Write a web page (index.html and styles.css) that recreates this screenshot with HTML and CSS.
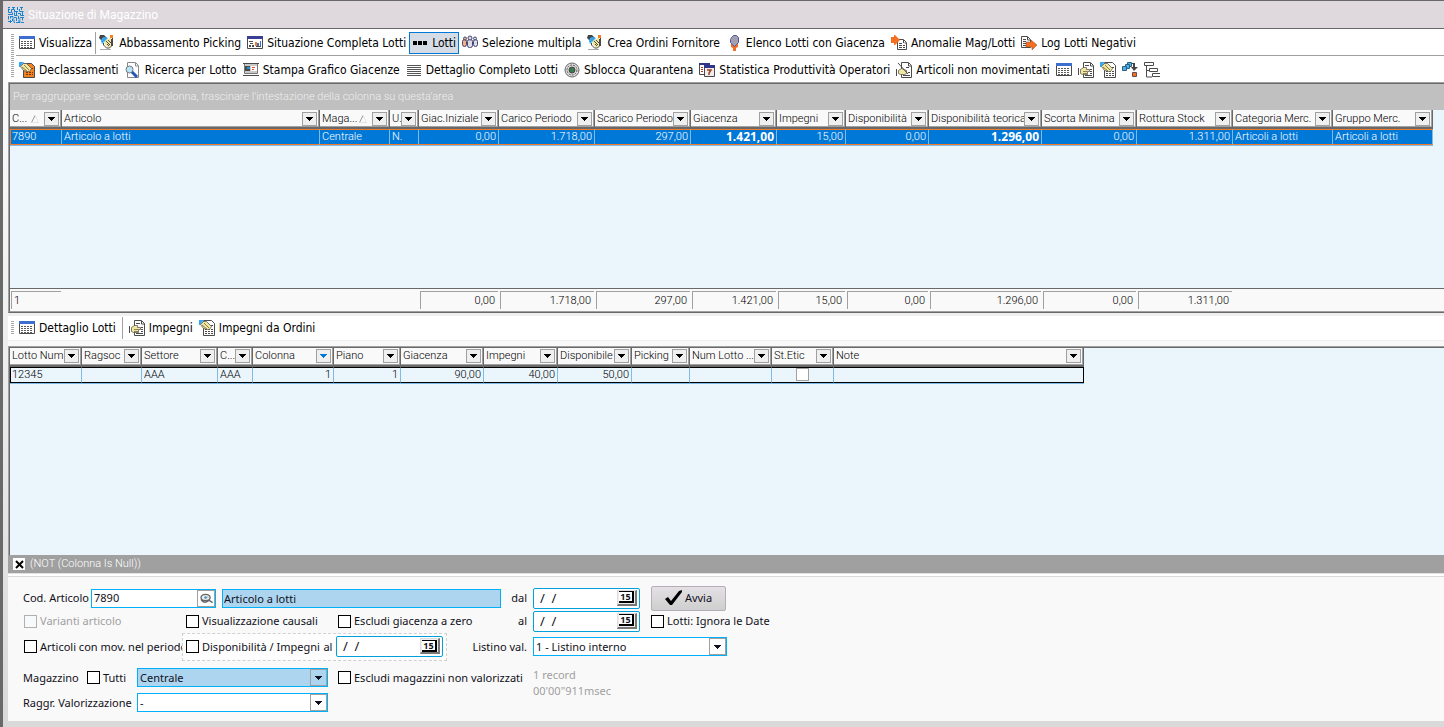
FILE: index.html
```html
<!DOCTYPE html>
<html lang="it">
<head>
<meta charset="utf-8">
<title>Situazione di Magazzino</title>
<link rel="stylesheet" href="styles.css">
</head>
<body>
<svg class="defs" aria-hidden="true">
  <symbol id="i-logo" viewBox="0 0 16 16"><g fill="none" stroke="#1583d0" stroke-width="1"><path d="M0 .5h2M4 .5h3M9.500 0v3M12 .5h3M.5 2v3.500h3V2.500h3v3M5.500 0v3M11.500 2v2.500h4M7 4.500h3M13.500 1v2M0 7.500h4.500V5.500M6.500 6v2.500h3M8.500 5v3M10 6.500h2.500v2H16M14.500 5v3M.5 9v3.500M2 9.500h3v3M2.500 9v2.500M6 10.500h2.500V14M10.500 9v3h2M12 10.500h4M14.500 10v3.500M0 14.500h4M2.500 13v3M4.500 14v-2M6 12.500v3h1M8 15.500h4v-2M10 14h2M13 15.500h3M0 .5v2h2"/></g></symbol>
  <symbol id="i-grid" viewBox="0 -1 16 16"><path fill="#fff" stroke="#4a4a4a" d="M.5.5h15v12H.5z"/><path fill="#3c6fd0" d="M0 0h16v3H0z"/><path stroke="#4a4a4a" stroke-dasharray="2 1" d="M2 5.500h12M2 7.500h12M2 9.500h12M2 11.500h12" stroke-width=".9"/></symbol>
  <symbol id="i-sign" viewBox="0 0 16 16"><path fill="#f2e6a0" d="M5 6l6-3h2v8l-3 2-4-3z"/><path fill="none" stroke="#4a4a4a" d="M4.500 8v2l3 3h3l2-2V4M7 6l4 4M9 5l3 3M8 9l2 2"/><path fill="#444" d="M1 0h4l3 3-3 3H3L0 3z"/><path fill="#35a7ee" d="M3 3l2-1 4 1-3 3-3 3-1-3z"/><path stroke="#aaa" fill="none" d="M1 14.500h11"/><path stroke="#4a4a4a" fill="none" d="M13.500 1v10"/><path fill="#f58220" d="M11 0h3v3h-3z"/></symbol>
  <symbol id="i-report" viewBox="0 -1 16 16"><path fill="#fff" stroke="#4a4a4a" d="M.5.5h15v12H.5z"/><path fill="#3a3f91" d="M0 0h16v3H0z"/><path fill="#4a4a4a" d="M2 5h4v1H2zM3 7h3v1H3zM2 9h2v2H2zM5 9h2v2H5zM9 10h5v1H9z"/><path fill="#f58220" d="M8 6h2v4H8z"/><path fill="#3c6fd0" d="M10 7h2v3h-2zM13 5h1v5h-1z"/></symbol>
  <symbol id="i-dots" viewBox="0 0 16 16"><path d="M1 6h4v4H1zM6 6h4v4H6zM11 6h4v4h-4z"/></symbol>
  <symbol id="i-people" viewBox="0 0 16 16"><g stroke="#45456e" fill="#dcdcea"><rect x=".5" y="4.500" width="4" height="7" rx="2" fill="#f4b183"/><rect x="11.500" y="4.500" width="4" height="7" rx="2"/><rect x="5.500" y="4.500" width="5" height="8" rx="2"/><circle cx="3" cy="3.500" r="1.500" fill="#f4b183"/><circle cx="8" cy="3" r="2"/><circle cx="13" cy="3.500" r="1.500"/></g></symbol>
  <symbol id="i-pin" viewBox="0 0 16 16"><path fill="#f36f21" d="M5 9h7v3l-2 1v3H7v-3l-2-1z"/><path fill="#a0a0b0" stroke="#5555a0" d="M5.500 2.500l2-2h3l2 2v5l-2 2-2 2-2-2-2-2v-3z"/></symbol>
  <symbol id="i-docin" viewBox="0 0 16 16"><path fill="#fff" stroke="#4a4a4a" d="M6.500 4.500h6l3 3v7h-9z"/><path stroke="#4a4a4a" fill="none" d="M12.500 5v3H15M8 8.500h3M8 10.500h6M8 12.500h6" stroke-dasharray="3 1"/><path fill="#f36f21" d="M0 2h3V0h1l5 5-5 5H3V8H0z"/></symbol>
  <symbol id="i-docout" viewBox="0 0 16 16"><path fill="#fff" stroke="#4a4a4a" d="M.5 1.500h6l3 3v8h-9z"/><path stroke="#4a4a4a" fill="none" d="M2 4.500h3M2 6.500h3M2 8.500h3M2 10.500h3M6.500 2v3H9"/><path fill="#f36f21" stroke="#9a4a18" stroke-width=".5" d="M5 7h5V5l6 5-5 5v-3H5z"/></symbol>
  <symbol id="i-declass" viewBox="0 0 16 16"><path fill="#f58220" stroke="#4a4a4a" d="M4.500 1.500h8l3 3v11h-11z"/><path stroke="#6b3a10" stroke-dasharray="2 1" d="M7 10.500h7M7 12.500h7M12 6.500h3"/><path fill="#35a7ee" d="M0 0h5L1 5H0z"/><path fill="#f2e6a0" stroke="#4a4a4a" stroke-width=".7" d="M1.500 4.500l3-3h3l5 5-2 3h-2l-4-1z"/><path stroke="#8a8050" fill="none" d="M5 3l5 5M3 5l5 4"/></symbol>
  <symbol id="i-find" viewBox="0 0 16 16"><path fill="#fff" stroke="#888" d="M2.500.5h8l3 3v12h-11z"/><path stroke="#888" fill="none" d="M10.500 1v3H13"/><circle cx="4.500" cy="7.500" r="3.500" fill="#b6e4f8" stroke="#777"/><path stroke="#2458b8" stroke-width="3" d="M7 10l5 5"/></symbol>
  <symbol id="i-chart" viewBox="0 -1 16 16"><path fill="#c9c9c9" stroke="#777" d="M1.500.5h13v10h-13z"/><path fill="#4a4a4a" d="M0 0h16v1H0zM2 3h5v5H2zM0 12h16v1H0z"/><path fill="#fff" d="M8 3h6v5H8z"/><path fill="#2690d8" d="M4 4h3v2H4z"/><path fill="#e25230" d="M9 4h3v1H9zM9 6h2v1H9z"/></symbol>
  <symbol id="i-lines" viewBox="0 0 16 16"><path stroke="#555" d="M1 3.500h14M1 5.500h14M1 7.500h14M1 9.500h14M1 11.500h14M1 13.500h14"/></symbol>
  <symbol id="i-lock" viewBox="0 0 16 16"><circle cx="8" cy="8" r="7" fill="#e4e4e4" stroke="#666"/><circle cx="8" cy="8" r="5" fill="#ddd" stroke="#555" stroke-dasharray="2 1"/><circle cx="8" cy="8" r="3" fill="#3b7a4a" stroke="#444"/></symbol>
  <symbol id="i-stat" viewBox="0 0 16 16"><path fill="#fff" stroke="#4a4a4a" d="M.5 1.500h10v11H.5z"/><path fill="#30358a" d="M0 1h11v2H0z"/><path fill="none" stroke="#a33c20" d="M2 5.500h2M2 7.500h2M2 9.500h2"/><path fill="#eee" stroke="#4a4a4a" d="M5.500 5.500h10v9h-10z"/><path fill="#30358a" d="M5 3h11v3H5z"/><path fill="none" stroke="#a33c20" stroke-width="1.500" d="M8 8h4l-2 3v2"/></symbol>
  <symbol id="i-hand" viewBox="0 0 16 16"><path fill="#fff" stroke="#4a4a4a" d="M5.500.5h7l3 3v12h-10z"/><path fill="none" stroke="#4a4a4a" d="M12.500 1v3H15M7 3.500h4M12 7.500h2M12 9.500h2M12 11.500h2M7 13.500h7"/><path fill="#f2e6a0" stroke="#4a4a4a" stroke-width=".7" d="M2.500 7.500l3-2h3v2h3v2h-2v3h-5l-2-1z"/><path stroke="#8a8050" fill="none" d="M5 9.500h4M5 11.500h4"/><path stroke="#4a4a4a" d="M.5 6v7"/></symbol>
  <symbol id="i-handpen" viewBox="0 0 16 16"><path fill="#fff" stroke="#4a4a4a" d="M5.500.5h7l3 3v12h-10z"/><path fill="none" stroke="#4a4a4a" d="M12.500 1v3H15M10 5.500h3M12 10.500h2M7 13.500h7"/><path fill="#f2e6a0" stroke="#4a4a4a" stroke-width=".7" d="M2.500 8.500l3-2 5 2v3l-2 1h-4l-2-1z"/><path stroke="#4a4a4a" fill="none" d="M.5 7v7M2 1l10 11"/></symbol>
  <symbol id="i-handdoc" viewBox="0 0 16 16"><path fill="#fff" stroke="#4a4a4a" d="M4.500.5h8l3 3v12h-11z"/><path fill="none" stroke="#4a4a4a" stroke-dasharray="2 1" d="M6 9.500h8M6 11.500h8M6 13.500h8M12 5.500h3"/><path fill="#35a7ee" d="M0 0h5L1 5H0z"/><path fill="#f2e6a0" stroke="#4a4a4a" stroke-width=".7" d="M1.500 4.500l3-3h3l5 5-2 3h-2l-4-1z"/><path stroke="#8a8050" fill="none" d="M5 3l5 5M3 5l5 4"/></symbol>
  <symbol id="i-boxes" viewBox="0 0 16 16"><g fill="#46b0f2" stroke="#30607a"><path d="M5.500.5h4v4h-4z"/><path d="M3.500 2.500h4v4h-4z"/><path d="M.5 4.500h4v4h-4z"/></g><path fill="#444" d="M10 1h3v4h3l-4 4-3-4h2V2h-1z"/><path fill="#f36f21" stroke="#6a4a4a" d="M10.500 10.500h4v4h-4z"/></symbol>
  <symbol id="i-tree" viewBox="0 0 16 16"><path fill="#fff" stroke="#4a4a4a" d="M.5.5h9v3h-9zM5.500 6.500h8v3h-8zM16 11.500H8.500v3H16M2.500 4v11H8M3 8.500h2"/></symbol>
  <symbol id="i-arrow" viewBox="0 0 7 4"><path fill="currentColor" d="M0 0h7v1H6v1H5v1H4v1H3V3H2V2H1V1H0z"/></symbol>
  <symbol id="i-sort" viewBox="0 0 8 8"><path fill="none" stroke="#999" d="M.5 7.500l3.500-7"/><path fill="none" stroke="#e4e4e4" d="M4 .5l3.500 7h-7"/></symbol>
  <symbol id="i-eye" viewBox="0 0 14 12"><ellipse cx="6" cy="5" rx="5" ry="3.500" fill="#eee" stroke="#666" stroke-width="1.500"/><path fill="none" stroke="#666" stroke-width="1.500" d="M1 7c2 4 6 4 9 1l3 2v1"/><circle cx="6" cy="5" r="1.500" fill="#3b9fc4"/><path fill="#c44" d="M8 4h1v1H8z"/></symbol>
  <symbol id="i-check" viewBox="0 0 17 16"><path d="M0 9l3-2 3 4L14 1l3-1v2L7 15H5z"/></symbol>
  <symbol id="i-x" viewBox="0 0 9 9"><path fill="none" stroke="#000" stroke-width="2" d="M1 1l7 7M8 1l-7 7"/></symbol>
</svg>

<div class="window">
  <header class="titlebar"><svg class="ic"><use href="#i-logo"/></svg><h1>Situazione di Magazzino</h1></header>
  <main class="client">
    <nav class="toolbar toolbar-main">
      <div class="toolrow">
        <button class="tool"><svg class="ic"><use href="#i-grid"/></svg>Visualizza</button>
        <span class="sep"></span>
        <button class="tool"><svg class="ic"><use href="#i-sign"/></svg>Abbassamento Picking</button>
        <button class="tool"><svg class="ic"><use href="#i-report"/></svg>Situazione Completa Lotti</button>
        <button class="tool pressed"><svg class="ic"><use href="#i-dots"/></svg>Lotti</button>
        <button class="tool"><svg class="ic"><use href="#i-people"/></svg>Selezione multipla</button>
        <button class="tool"><svg class="ic"><use href="#i-sign"/></svg>Crea Ordini Fornitore</button>
        <button class="tool"><svg class="ic"><use href="#i-pin"/></svg>Elenco Lotti con Giacenza</button>
        <button class="tool"><svg class="ic"><use href="#i-docin"/></svg>Anomalie Mag/Lotti</button>
        <button class="tool"><svg class="ic"><use href="#i-docout"/></svg>Log Lotti Negativi</button>
      </div>
      <div class="toolrow">
        <button class="tool"><svg class="ic"><use href="#i-declass"/></svg>Declassamenti</button>
        <button class="tool"><svg class="ic"><use href="#i-find"/></svg>Ricerca per Lotto</button>
        <button class="tool"><svg class="ic"><use href="#i-chart"/></svg>Stampa Grafico Giacenze</button>
        <button class="tool"><svg class="ic"><use href="#i-lines"/></svg>Dettaglio Completo Lotti</button>
        <button class="tool"><svg class="ic"><use href="#i-lock"/></svg>Sblocca Quarantena</button>
        <button class="tool"><svg class="ic"><use href="#i-stat"/></svg>Statistica Produttività Operatori</button>
        <button class="tool"><svg class="ic"><use href="#i-handpen"/></svg>Articoli non movimentati</button>
        <button class="tool" aria-label="Griglia"><svg class="ic"><use href="#i-grid"/></svg></button>
        <button class="tool" aria-label="Impegni"><svg class="ic"><use href="#i-hand"/></svg></button>
        <button class="tool" aria-label="Ordini"><svg class="ic"><use href="#i-handdoc"/></svg></button>
        <button class="tool" aria-label="Movimenti"><svg class="ic"><use href="#i-boxes"/></svg></button>
        <button class="tool" aria-label="Struttura"><svg class="ic"><use href="#i-tree"/></svg></button>
      </div>
    </nav>

    <section class="grid grid-stock">
      <p class="groupbar">Per raggruppare secondo una colonna, trascinare l'intestazione della colonna su questa'area</p>
      <div class="gridbody">
        <table class="data stock">
          <colgroup><col class="w52"><col class="w258"><col class="w70"><col class="w29"><col class="w80"><col class="w96"><col class="w96"><col class="w86"><col class="w69"><col class="w83"><col class="w113"><col class="w95"><col class="w96"><col class="w100"><col class="w100"></colgroup>
          <thead><tr>
            <th><div class="hd"><span>C...</span><svg class="sort"><use href="#i-sort"/></svg><button aria-label="Filtra"><svg><use href="#i-arrow"/></svg></button></div></th>
            <th><div class="hd"><span>Articolo</span><button aria-label="Filtra"><svg><use href="#i-arrow"/></svg></button></div></th>
            <th><div class="hd"><span>Maga...</span><svg class="sort"><use href="#i-sort"/></svg><button aria-label="Filtra"><svg><use href="#i-arrow"/></svg></button></div></th>
            <th><div class="hd"><span>U.</span><button aria-label="Filtra"><svg><use href="#i-arrow"/></svg></button></div></th>
            <th><div class="hd"><span>Giac.Iniziale</span><button aria-label="Filtra"><svg><use href="#i-arrow"/></svg></button></div></th>
            <th><div class="hd"><span>Carico Periodo</span><button aria-label="Filtra"><svg><use href="#i-arrow"/></svg></button></div></th>
            <th><div class="hd"><span>Scarico Periodo</span><button aria-label="Filtra"><svg><use href="#i-arrow"/></svg></button></div></th>
            <th><div class="hd"><span>Giacenza</span><button aria-label="Filtra"><svg><use href="#i-arrow"/></svg></button></div></th>
            <th><div class="hd"><span>Impegni</span><button aria-label="Filtra"><svg><use href="#i-arrow"/></svg></button></div></th>
            <th><div class="hd"><span>Disponibilità</span><button aria-label="Filtra"><svg><use href="#i-arrow"/></svg></button></div></th>
            <th><div class="hd"><span>Disponibilità teorica</span><button aria-label="Filtra"><svg><use href="#i-arrow"/></svg></button></div></th>
            <th><div class="hd"><span>Scorta Minima</span><button aria-label="Filtra"><svg><use href="#i-arrow"/></svg></button></div></th>
            <th><div class="hd"><span>Rottura Stock</span><button aria-label="Filtra"><svg><use href="#i-arrow"/></svg></button></div></th>
            <th><div class="hd"><span>Categoria Merc.</span><button aria-label="Filtra"><svg><use href="#i-arrow"/></svg></button></div></th>
            <th><div class="hd"><span>Gruppo Merc.</span><button aria-label="Filtra"><svg><use href="#i-arrow"/></svg></button></div></th>
          </tr></thead>
          <tbody><tr class="selected">
            <td>7890</td><td>Articolo a lotti</td><td>Centrale</td><td>N.</td><td class="num">0,00</td><td class="num">1.718,00</td><td class="num">297,00</td><td class="num strong">1.421,00</td><td class="num">15,00</td><td class="num">0,00</td><td class="num strong">1.296,00</td><td class="num">0,00</td><td class="num">1.311,00</td><td>Articoli a lotti</td><td>Articoli a lotti</td>
          </tr></tbody>
        </table>
      </div>
      <div class="gridfoot">
        <table class="totals">
          <colgroup><col class="w52"><col class="w258"><col class="w70"><col class="w29"><col class="w80"><col class="w96"><col class="w96"><col class="w86"><col class="w69"><col class="w83"><col class="w113"><col class="w95"><col class="w96"><col class="w100"><col class="w100"></colgroup>
          <tbody><tr>
            <td><div class="total count">1</div></td><td></td><td></td><td></td>
            <td><div class="total">0,00</div></td><td><div class="total">1.718,00</div></td><td><div class="total">297,00</div></td><td><div class="total">1.421,00</div></td><td><div class="total">15,00</div></td><td><div class="total">0,00</div></td><td><div class="total">1.296,00</div></td><td><div class="total">0,00</div></td><td><div class="total">1.311,00</div></td><td></td><td></td>
          </tr></tbody>
        </table>
      </div>
    </section>

    <nav class="toolbar toolbar-sub">
      <div class="toolrow">
        <button class="tool"><svg class="ic"><use href="#i-grid"/></svg>Dettaglio Lotti</button>
        <span class="sep"></span>
        <button class="tool"><svg class="ic"><use href="#i-hand"/></svg>Impegni</button>
        <button class="tool"><svg class="ic"><use href="#i-handdoc"/></svg>Impegni da Ordini</button>
      </div>
    </nav>

    <section class="grid grid-lots">
      <div class="gridbody">
        <table class="data lots">
          <colgroup><col class="w72"><col class="w60"><col class="w76"><col class="w35"><col class="w81"><col class="w67"><col class="w83"><col class="w74"><col class="w74"><col class="w58"><col class="w82"><col class="w62"><col class="w250"></colgroup>
          <thead><tr>
            <th><div class="hd"><span>Lotto Num</span><button aria-label="Filtra"><svg><use href="#i-arrow"/></svg></button></div></th>
            <th><div class="hd"><span>Ragsoc</span><button aria-label="Filtra"><svg><use href="#i-arrow"/></svg></button></div></th>
            <th><div class="hd"><span>Settore</span><button aria-label="Filtra"><svg><use href="#i-arrow"/></svg></button></div></th>
            <th><div class="hd"><span>C...</span><button aria-label="Filtra"><svg><use href="#i-arrow"/></svg></button></div></th>
            <th><div class="hd"><span>Colonna</span><button class="active" aria-label="Filtra"><svg><use href="#i-arrow"/></svg></button></div></th>
            <th><div class="hd"><span>Piano</span><button aria-label="Filtra"><svg><use href="#i-arrow"/></svg></button></div></th>
            <th><div class="hd"><span>Giacenza</span><button aria-label="Filtra"><svg><use href="#i-arrow"/></svg></button></div></th>
            <th><div class="hd"><span>Impegni</span><button aria-label="Filtra"><svg><use href="#i-arrow"/></svg></button></div></th>
            <th><div class="hd"><span>Disponibile</span><button aria-label="Filtra"><svg><use href="#i-arrow"/></svg></button></div></th>
            <th><div class="hd"><span>Picking</span><button aria-label="Filtra"><svg><use href="#i-arrow"/></svg></button></div></th>
            <th><div class="hd"><span>Num Lotto ...</span><button aria-label="Filtra"><svg><use href="#i-arrow"/></svg></button></div></th>
            <th><div class="hd"><span>St.Etic</span><button aria-label="Filtra"><svg><use href="#i-arrow"/></svg></button></div></th>
            <th><div class="hd"><span>Note</span><button aria-label="Filtra"><svg><use href="#i-arrow"/></svg></button></div></th>
          </tr></thead>
          <tbody><tr class="focused">
            <td>12345</td><td></td><td>AAA</td><td>AAA</td><td class="num">1</td><td class="num">1</td><td class="num">90,00</td><td class="num">40,00</td><td class="num">50,00</td><td></td><td></td><td class="mid"><input type="checkbox" class="cellcheck" aria-label="St.Etic"></td><td></td>
          </tr></tbody>
        </table>
      </div>
      <div class="filterbar"><button aria-label="Rimuovi filtro"><svg><use href="#i-x"/></svg></button><span>(NOT (Colonna Is Null))</span></div>
    </section>

    <form class="params">
      <div class="cell article">
        <label class="lbl-art" for="cod">Cod. Articolo</label>
        <div class="box code"><input id="cod" type="text" value="7890"><button type="button" class="lookup" aria-label="Cerca articolo"><svg><use href="#i-eye"/></svg></button></div>
        <input class="box desc" type="text" value="Articolo a lotti" aria-label="Descrizione articolo">
      </div>
      <label class="cell right" for="dal">dal</label>
      <div class="cell"><div class="box date"><input id="dal" type="text" value="/  /"><button type="button" aria-label="Calendario"><span>15</span></button></div></div>
      <div class="cell tail"><button type="button" class="run"><svg><use href="#i-check"/></svg>Avvia</button></div>

      <label class="cell check first off"><input type="checkbox" disabled>Varianti articolo</label>
      <label class="cell check inset"><input type="checkbox">Visualizzazione causali</label>
      <label class="cell check inset"><input type="checkbox">Escludi giacenza a zero</label>
      <label class="cell right al" for="al">al</label>
      <div class="cell"><div class="box date"><input id="al" type="text" value="/  /"><button type="button" aria-label="Calendario"><span>15</span></button></div></div>
      <label class="cell check tail"><input type="checkbox">Lotti: Ignora le Date</label>

      <label class="cell check first"><input type="checkbox">Articoli con mov. nel periodo</label>
      <div class="cell avail">
        <label class="check"><input type="checkbox">Disponibilità / Impegni</label>
        <label for="al2">al</label>
        <div class="box date"><input id="al2" type="text" value="/  /"><button type="button" aria-label="Calendario"><span>15</span></button></div>
      </div>
      <label class="cell right wide" for="listino">Listino val.</label>
      <div class="cell drop list"><select id="listino"><option>1 - Listino interno</option></select><span class="knob"><svg><use href="#i-arrow"/></svg></span></div>

      <div class="cell store">
        <label class="lbl-store" for="mag">Magazzino</label>
        <label class="check all"><input type="checkbox">Tutti</label>
        <div class="drop tinted"><select id="mag"><option>Centrale</option></select><span class="knob"><svg><use href="#i-arrow"/></svg></span></div>
      </div>
      <label class="cell check inset long"><input type="checkbox">Escludi magazzini non valorizzati</label>
      <output class="cell stats">1 record<br>00'00"911msec</output>

      <div class="cell value">
        <label for="rag">Raggr. Valorizzazione</label>
        <div class="drop"><select id="rag"><option>-</option></select><span class="knob"><svg><use href="#i-arrow"/></svg></span></div>
      </div>
    </form>
  </main>
</div>
</body>
</html>
```

FILE: styles.css
```css
* { box-sizing: border-box; }
body { margin: 0; background: #d9d9d9; color: #000; font: 11px/14px "Noto Sans", "DejaVu Sans Condensed", sans-serif; }
button, input, select { font: inherit; color: inherit; margin: 0; padding: 0; border-radius: 0; }
button { border: 0; background: none; display: flex; align-items: center; justify-content: center; }
.defs { position: absolute; width: 0; height: 0; }
.ic { width: 16px; height: 16px; flex: none; display: block; }

.window { min-height: 100vh; display: flex; flex-direction: column; border-top: 1px solid #696969; border-left: 3px solid #696969; }
.titlebar { height: 28px; display: flex; align-items: center; gap: 4px; padding-left: 5px; background: #dfd9de; border-bottom: 1px solid #696969; color: #fff; }
.titlebar h1 { margin: 0; font: 12px/16px Roboto, "Noto Sans", sans-serif; }
.client { flex: 1; display: flex; flex-direction: column; padding: 0 0 6px 5px; background: linear-gradient(#fdfdfd, #eeeeee 45%, #d9d9d9); }

.toolbar { background: #fff; font-family: "DejaVu Sans Condensed", "Noto Sans", sans-serif; font-size: 12px; padding-left: 8px; position: relative; }
.toolbar::before { content: ""; position: absolute; left: 3px; top: 5px; bottom: 5px; width: 3px; background: repeating-linear-gradient(#a8a8a8 0 1px, #fff 1px 2px); }
.toolrow { height: 26px; padding-top: 2px; display: flex; align-items: center; }
.toolrow + .toolrow { border-top: 1px solid #a0a0a0; height: 27px; }
.tool { height: 22px; gap: 4px; padding: 0 3px; white-space: nowrap; flex: none; border: 0; }
.tool.pressed { background: #d5dce6; outline: 1px solid #0078d7; outline-offset: -1px; }
.sep { width: 1px; height: 22px; background: #a0a0a0; }
.toolbar-sub { margin: 2px 0 5px; border: 1px solid #efefef; border-width: 1px 0; box-shadow: 0 5px #f9f9f9; }
.toolbar-sub .toolrow { height: 24px; padding-top: 0; }
.toolbar-sub .sep { margin: 0 3px; }

.grid { display: flex; flex-direction: column; border-left: 1px solid #a0a0a0; border-top: 1px solid #a0a0a0; font-family: Roboto, "Noto Sans", sans-serif; font-weight: 300; }
.grid > * { border-left: 1px solid #696969; }
.grid-stock { flex: 230 1 0; border-bottom: 1px solid #696969; }
.grid-lots { flex: 228 1 0; }
.groupbar { margin: 0; height: 27px; border-top: 1px solid #696969; background: #c0c0c0; color: #eee; padding: 6px 3px; }
.gridbody { flex: 1; background: #eaf5fc; }
.grid-lots .gridbody { border-top: 1px solid #696969; }
.data, .totals { table-layout: fixed; border-collapse: separate; border-spacing: 0; width: 1px; }
.data th { height: 19px; padding: 0; font-weight: 300; text-align: left; background: #f9f9f9; border-bottom: 2px solid #696969; border-right: 1px solid #696969; box-shadow: inset -1px -1px #a0a0a0; }
.hd { height: 17px; display: flex; align-items: center; padding: 0 2px; overflow: hidden; white-space: nowrap; }
.hd span { flex: 1; min-width: 0; }
.hd button { flex: none; width: 15px; height: 14px; border: 1px solid #a0a0a0; background: #efefef; }
.hd button svg { width: 7px; height: 4px; }
.hd button.active { color: #0078d7; }
.hd .sort { width: 8px; height: 8px; flex: none; margin-right: 5px; }
.data td { height: 16px; padding: 0 2px; line-height: 14px; overflow: hidden; white-space: nowrap; border-right: 1px solid #7fbbe6; }
.data .num { text-align: right; }
.data .mid { text-align: center; }
.data .strong { font-family: "Open Sans", "Noto Sans", sans-serif; font-weight: 700; font-size: 12px; }
.selected td { background: #0078d7; color: #fff; border-top: 1px solid #f47b28; border-bottom: 1px solid #f47b28; box-shadow: 0 1px #7fbbe6; }
.selected td:first-child { border-left: 1px solid #f47b28; padding-left: 1px; }
.focused td { border-top: 1px solid #000; border-bottom: 1px solid #000; box-shadow: 0 1px #7fbbe6; }
.focused td:first-child { border-left: 1px solid #000; padding-left: 1px; }
.focused td:last-child { border-right-color: #000; }
.cellcheck { appearance: none; display: block; width: 13px; height: 13px; margin: 0 auto; border: 1px solid #a0a0a0; background: #fff; }
.gridfoot { background: #f9f9f9; border-top: 1px solid #696969; border-bottom: 1px solid #a0a0a0; padding: 2px 0; }
.totals td { padding: 0 1px; height: 18px; }
.total { height: 18px; line-height: 17px; text-align: right; padding: 0 3px 0 2px; border: 1px solid #a0a0a0; border-width: 1px 0 0 1px; }
.total.count { text-align: left; }
.filterbar { height: 18px; display: flex; align-items: center; gap: 5px; padding-left: 3px; background: #a0a0a0; color: #fff; border-left-color: #a0a0a0; }
.filterbar button { width: 12px; height: 12px; background: #fff; }
.filterbar svg { width: 9px; height: 9px; }
.w29 { width: 29px; } .w35 { width: 35px; } .w52 { width: 52px; } .w58 { width: 58px; } .w60 { width: 60px; } .w62 { width: 62px; }
.w67 { width: 67px; } .w69 { width: 69px; } .w70 { width: 70px; } .w72 { width: 72px; } .w74 { width: 74px; } .w76 { width: 76px; }
.w80 { width: 80px; } .w81 { width: 81px; } .w82 { width: 82px; } .w83 { width: 83px; } .w86 { width: 86px; } .w95 { width: 95px; }
.w96 { width: 96px; } .w100 { width: 100px; } .w113 { width: 113px; } .w250 { width: 250px; } .w258 { width: 258px; }

.params { margin-top: 1px; border-top: 2px solid #fff; background: #f9f9f9; box-shadow: inset 0 1px #d9d9d9; padding: 10px 14px 10px 15px; display: grid; grid-template-columns: 159px 152px 113px 58px 28px 117px 1fr; grid-template-rows: 24px 22px 29px 33px 17px; align-items: center; white-space: nowrap; color: #101020; }
.check { display: flex; align-items: center; gap: 3px; }
.check input { appearance: none; flex: none; width: 13px; height: 13px; border: 1px solid #000; background: #fff; }
.off { color: #a0a0a0; }
.off input { border-color: #b0b0b0; background: #f6fafa; }
.first { padding-left: 1px; }
.inset { padding-left: 4px; }
.right { justify-self: end; padding-right: 6px; }
.wide { grid-column: 4 / span 2; }
.al { grid-column: 5; }
.box, .drop { background: #fff; border: 1px solid #00b0f8; height: 19px; }
.article { grid-column: 1 / span 4; display: flex; align-items: center; }
.lbl-art { width: 68px; }
.code { display: flex; width: 125px; margin-right: 6px; }
.code input, .date input { border: 0; background: none; flex: 1; min-width: 0; outline: 0; }
.code input { padding-left: 2px; }
.lookup { width: 18px; border: 1px solid #a0a0a0; }
.lookup svg { width: 13px; height: 11px; }
.desc { width: 279px; padding: 0 1px; background: #add5f0; }
.date { display: flex; width: 107px; height: 21px; border-radius: 2px; padding: 1px 2px 2px 6px; border-color: #00a0dc; }
.date input { white-space: pre; font-size: 13px; }
.date button { width: 20px; background: #eee; border: 1px solid #ddd; border-right: 2px solid #777; border-bottom: 2px solid #777; }
.date span { font-size: 9px; line-height: 9px; font-weight: 700; border: 1px solid #000; border-width: 1px 2px 2px 0; padding: 0 1px; background: #fff; }
.run { width: 75px; height: 25px; gap: 3px; background: linear-gradient(#e4e0e4, #cfcfcf); border: 1px solid #b5adb8; border-radius: 2px; }
.run svg { width: 17px; height: 16px; }
.tail { margin-left: 1px; }
.avail { grid-column: 2 / span 2; width: 265px; height: 28px; display: flex; align-items: center; padding: 0 3px; border: 1px dashed #d0d0d0; background: #fdfdfd; justify-content: space-between; }
.list { grid-column: 6 / span 2; width: 194px; }
.drop { position: relative; }
.drop select { appearance: none; width: 100%; height: 100%; border: 0; background: none; padding: 0 18px 0 2px; outline: 0; display: block; }
.knob { position: absolute; top: 0; right: 0; bottom: 0; width: 17px; display: flex; align-items: center; justify-content: center; border: 1px solid #a0a0a0; background: inherit; pointer-events: none; }
.knob svg { width: 7px; height: 4px; }
.tinted { background: #add5f0; }
.store, .value { grid-column: 1 / span 2; display: flex; align-items: center; }
.store .drop, .value .drop { width: 191px; }
.lbl-store { width: 64px; }
.all { width: 50px; }
.value label { width: 114px; }
.long { grid-column: 3 / span 3; }
.stats { grid-column: 6; grid-row: 4 / span 2; line-height: 16px; color: #a0a0a0; align-self: start; padding-top: 6px; }
```
